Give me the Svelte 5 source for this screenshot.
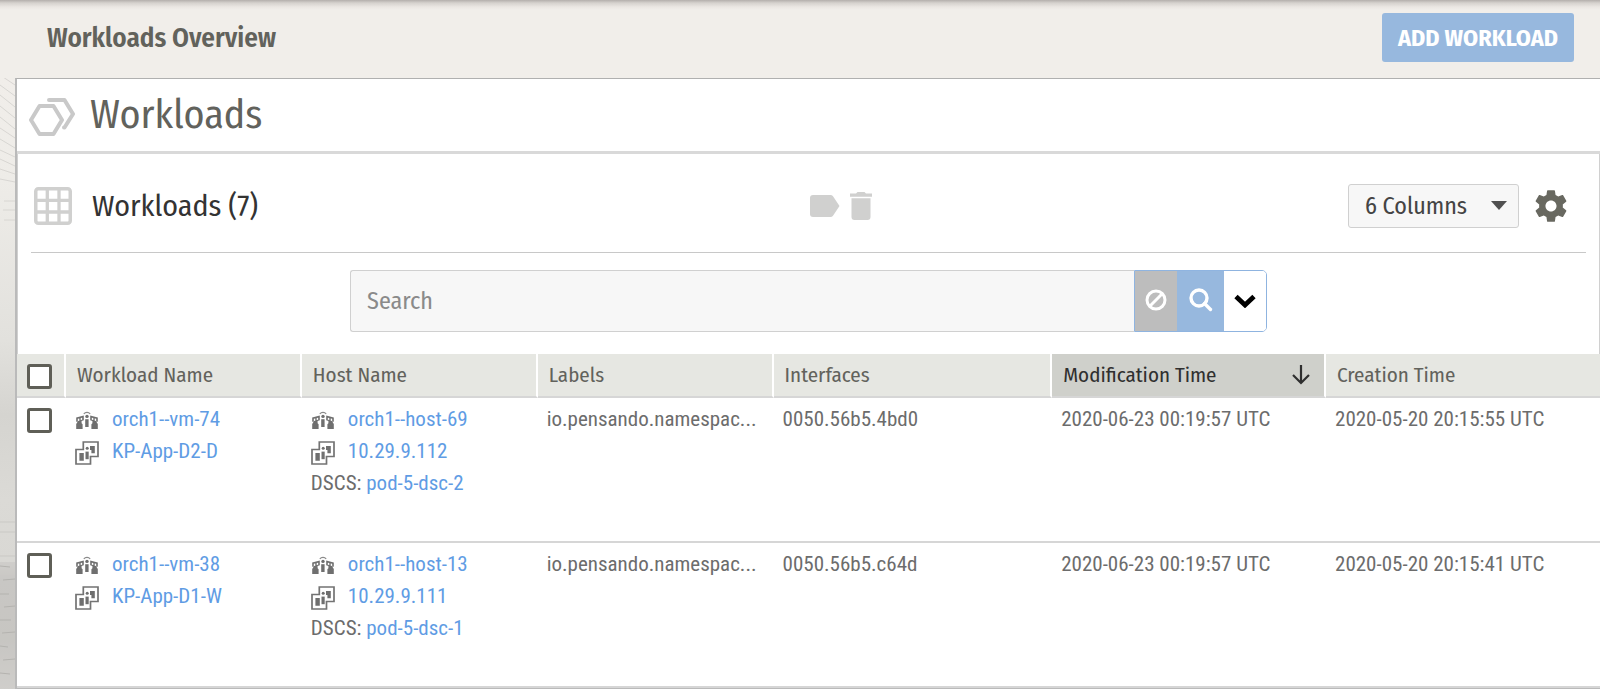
<script>
  const columns = [
    { name: 'Workload Name', cls: 'w1' },
    { name: 'Host Name', cls: 'w1' },
    { name: 'Labels', cls: 'w1' },
    { name: 'Interfaces', cls: 'w2' },
    { name: 'Modification Time', cls: 'w3', sorted: true },
    { name: 'Creation Time', cls: 'rest' }
  ];
  const rows = [
    { orch: 'orch1--vm-74', vm: 'KP-App-D2-D', host: 'orch1--host-69', ip: '10.29.9.112', dsc: 'pod-5-dsc-2', label: 'io.pensando.namespac...', mac: '0050.56b5.4bd0', mod: '2020-06-23 00:19:57 UTC', created: '2020-05-20 20:15:55 UTC' },
    { orch: 'orch1--vm-38', vm: 'KP-App-D1-W', host: 'orch1--host-13', ip: '10.29.9.111', dsc: 'pod-5-dsc-1', label: 'io.pensando.namespac...', mac: '0050.56b5.c64d', mod: '2020-06-23 00:19:57 UTC', created: '2020-05-20 20:15:41 UTC' }
  ];
</script>

{#snippet orchIcon()}
  <svg class="ic" width="24" height="24" viewBox="0 0 24 24" aria-hidden="true">
    <g fill="#6f6f6f">
      <circle cx="12" cy="7.400" r="1.700" />
      <path d="M10.200 10.200h3.400V18H10.200z" />
      <path d="M1.200 8.400 8.800 6.600v4.600L6.600 12v2.200l1 1V20H1.200v-5l1.600-2.400-1.600.2z" />
      <path d="M22.800 8.400 15.200 6.600v4.600l2.200.8v2.200l-1 1V20h6.400v-5l-1.600-2.400 1.600.2z" />
    </g>
    <path d="M8.800 5a3.900 3.900 0 0 1 6.400 0" fill="none" stroke="#8a8a8a" stroke-width="1.200" />
    <path d="M2.800 9.800l1.500-.4v2.400l-1.500.3zM5.700 9.100l1.500-.4v2l-1.500.4zM21.200 9.800l-1.500-.4v2.400l1.500.3zM18.300 9.100l-1.500-.4v2l1.500.4z" fill="#fff" />
  </svg>
{/snippet}

{#snippet vmIcon()}
  <svg class="ic" width="24" height="24" viewBox="0 0 24 24" aria-hidden="true">
    <path d="M8.300 8.500V1H23v14.500h-7.500V23H1V8.500z" fill="none" stroke="#737373" stroke-width="1.700" />
    <g fill="#6f6f6f">
      <path d="M4.400 12h4.400v7.800H4.400zM15 5h4.800v7.200h-3.400V9H15z" />
      <circle cx="12.200" cy="7.200" r="1.500" />
      <path d="M10.500 10.600h3.200v7.600h-3.200z" />
    </g>
  </svg>
{/snippet}

<div class="page">
  <svg class="texture" width="15" height="615" viewBox="0 0 15 615" fill="none" stroke="#d8d6d2" aria-hidden="true">
    <path d="M0 0 15 10M0 10 15 21M0 20 15 32M0 31 15 43M0 42 15 54M0 53 15 63M0 64 15 73M0 75 15 82M0 84 15 91M0 94 15 99M0 104 15 107M4 126H15M3 135H15M4 145H15" />
    <path d="M0 447H15M0 457H15M0 481H15" stroke="#cac9c5" />
    <path d="M0 487H15V615H0z" fill="#c5c4c0" fill-opacity=".45" stroke="none" />
    <path d="M0 491 10 492M3 505 15 504M0 519H9M4 532 15 531M0 545H11M2 558 15 557M0 571 8 572M3 585 15 584M0 598 10 599" stroke="#b4b3af" />
  </svg>
  <header>
    <h1>Workloads Overview</h1>
    <button class="add">ADD WORKLOAD</button>
  </header>
  <main>
    <div class="title">
      <svg width="46" height="38" viewBox="0 0 46 38" fill="none" stroke="#c9c9c9" stroke-width="4" stroke-linejoin="round" stroke-linecap="round" aria-hidden="true">
        <path d="M10.500 8h14L33 22 24.500 36h-14L2 22z" />
        <path d="M20 2h15.500L44 16 35.500 29.500H35" />
      </svg>
      <h2>Workloads</h2>
    </div>
    <section>
      <div class="toolbar">
        <div class="left">
          <svg width="38" height="38" viewBox="0 0 38 38" aria-hidden="true">
            <rect x="1.750" y="1.750" width="34.500" height="34.500" rx="2.500" fill="none" stroke="#d0d0cf" stroke-width="3.500" />
            <path d="M13.300 1v36M25 1v36M1 13.300h36M1 25h36" stroke="#d0d0cf" stroke-width="3.300" />
          </svg>
          <h3>Workloads (7)</h3>
        </div>
        <div class="actions">
          <button aria-label="Edit labels">
            <svg width="30" height="22" viewBox="0 0 30 22"><path d="M3 0h17.500q1.500 0 2.500 1.300L29.500 11 23 20.700Q22 22 20.500 22H3q-3 0-3-3V3q0-3 3-3z" fill="#d0d0cf" /></svg>
          </button>
          <button aria-label="Delete">
            <svg width="22" height="28" viewBox="0 0 22 28"><path d="M0 1.500h6L7.500 0h7L16 1.500h6v3.200H0zM1.500 6.200h19V25q0 3-3 3h-13q-3 0-3-3z" fill="#d0d0cf" /></svg>
          </button>
        </div>
        <div class="right">
          <div class="picker">
            <select aria-label="Columns"><option>6 Columns</option></select>
            <svg width="16" height="9" viewBox="0 0 16 9" aria-hidden="true"><path d="M0 0h16L8 9z" fill="#505050" /></svg>
          </div>
          <button aria-label="Settings">
            <svg width="38" height="38" viewBox="0 0 24 24"><path fill="#686860" d="M19.430 12.980c.04-.32.07-.64.07-.98s-.03-.66-.07-.98l2.110-1.650c.19-.15.24-.42.12-.64l-2-3.460c-.12-.22-.39-.3-.61-.22l-2.490 1c-.52-.4-1.080-.73-1.690-.98l-.38-2.650C14.460 2.180 14.250 2 14 2h-4c-.25 0-.46.18-.49.42l-.38 2.650c-.61.25-1.170.59-1.690.98l-2.490-1c-.23-.09-.49 0-.61.22l-2 3.460c-.13.22-.07.49.12.64l2.110 1.650c-.04.32-.07.65-.07.98s.03.66.07.98l-2.110 1.650c-.19.15-.24.42-.12.64l2 3.460c.12.22.39.3.61.22l2.490-1c.52.4 1.080.73 1.690.98l.38 2.650c.03.24.24.42.49.42h4c.25 0 .46-.18.49-.42l.38-2.650c.61-.25 1.170-.59 1.690-.98l2.490 1c.23.09.49 0 .61-.22l2-3.460c.12-.22.07-.49-.12-.64l-2.110-1.650zM12 15.500c-1.930 0-3.500-1.570-3.500-3.500s1.570-3.500 3.500-3.500 3.500 1.570 3.500 3.500-1.570 3.500-3.500 3.500z" /></svg>
          </button>
        </div>
      </div>
      <form class="search" onsubmit={(e) => e.preventDefault()}>
        <input type="text" placeholder="Search" aria-label="Search" />
        <div class="group">
          <button type="button" class="clear" aria-label="Clear">
            <svg width="22" height="22" viewBox="0 0 22 22" fill="none" stroke="#fff" stroke-width="3"><circle cx="11" cy="11" r="9" /><path d="M17.200 4.800 4.800 17.200" /></svg>
          </button>
          <button type="submit" class="go" aria-label="Run search">
            <svg width="24" height="24" viewBox="0 0 24 24" fill="none" stroke="#fff" stroke-width="3.400"><circle cx="10" cy="10" r="8" /><path d="M15.500 15.500 21.500 21.500" stroke-linecap="round" /></svg>
          </button>
          <button type="button" class="more" aria-label="Advanced search">
            <svg width="22" height="14" viewBox="0 0 22 14" fill="none" stroke="#000" stroke-width="4.800"><path d="M2 2.500 11 11 20 2.500" /></svg>
          </button>
        </div>
      </form>
    </section>
    <table>
      <thead>
        <tr>
          <th class="w0"><input type="checkbox" aria-label="Select all" /></th>
          {#each columns as c}
            <th class={c.cls} class:sorted={c.sorted}>
              <div>
                {c.name}
                {#if c.sorted}
                  <svg width="18" height="20" viewBox="0 0 18 20" fill="none" stroke="#2f2f2f" stroke-width="2.200" aria-hidden="true"><path d="M9 0v17.500M1 10 9 18 17 10" /></svg>
                {/if}
              </div>
            </th>
          {/each}
        </tr>
      </thead>
      <tbody>
        {#each rows as r}
          <tr>
            <td class="w0"><input type="checkbox" aria-label={'Select ' + r.vm} /></td>
            <td>
              <div class="line">{@render orchIcon()}<a href="#orch">{r.orch}</a></div>
              <div class="line">{@render vmIcon()}<a href="#vm">{r.vm}</a></div>
            </td>
            <td>
              <div class="line">{@render orchIcon()}<a href="#host">{r.host}</a></div>
              <div class="line">{@render vmIcon()}<a href="#ip">{r.ip}</a></div>
              <div>DSCS: <a href="#dsc">{r.dsc}</a></div>
            </td>
            <td>{r.label}</td>
            <td>{r.mac}</td>
            <td>{r.mod}</td>
            <td>{r.created}</td>
          </tr>
        {/each}
      </tbody>
    </table>
  </main>
</div>

<style>
  :global(body) { background: #fff; }
  .page {
    position: relative;
    font-family: "Fira Sans Condensed", "Roboto Condensed", "Liberation Sans Narrow", "Open Sans", sans-serif;
    color: #62625c;
    min-height: 100vh;
    box-sizing: border-box;
    padding-left: 15px;
    overflow: hidden;
    background: linear-gradient(180deg, #f1eeea 78px, #eeece8 180px, #e2e1dd 340px, #d5d4d0 415px, #dbdad6 500px, #d9d8d4 561px, #cbcac6 580px, #c9c8c4 640px, #d8d7d3 689px);
  }
  .texture { position: absolute; left: 0; top: 75px; }
  header {
    position: relative;
    display: flex;
    align-items: center;
    justify-content: space-between;
    height: 78px;
    box-sizing: border-box;
    margin-left: -15px;
    padding: 0 26px 3px 47px;
    background: linear-gradient(180deg, #b4afac 0, #d6d2ce 3px, #ebe7e3 7px, #f1eeea 10px);
  }
  h1, h2, h3 { margin: 0; font-weight: 400; }
  h1 { font-size: 27px; font-weight: 600; }
  h2 { font-size: 40px; line-height: 48px; padding-bottom: 3px; }
  h3 { font-size: 30px; color: #333; }
  button { border: 0; padding: 0; background: none; font-family: inherit; display: flex; align-items: center; justify-content: center; }
  .add { padding: 0 16px; height: 49px; border-radius: 3px; background: #97b8de; color: #fff; font-size: 24px; font-weight: 700; white-space: nowrap; }
  main { background: #fff; border: 2px solid #bababa; border-top: 1px solid #b0b0b0; border-right: 0; min-height: 609px; }
  .title { display: flex; align-items: center; gap: 15px; height: 75px; box-sizing: border-box; padding: 3px 12px 0; border-bottom: 3px solid #d9d9d9; }
  section { display: flow-root; border: 1px solid #d0d0d0; border-width: 0 1px; }
  .toolbar { display: grid; grid-template-columns: 10fr auto 9fr; align-items: center; height: 99px; margin: 0 13px; border-bottom: 1px solid #c8c8c8; padding: 6px 16px 0 3px; box-sizing: border-box; }
  .left, .right, .actions { display: flex; align-items: center; }
  .left { gap: 20px; }
  .actions { gap: 10px; }
  .right { justify-content: flex-end; gap: 13px; }
  .picker { position: relative; }
  .picker svg { position: absolute; right: 12px; top: 17px; pointer-events: none; }
  select {
    display: block; appearance: none; width: 171px; height: 44px; border: 1px solid #d0d0d0; border-radius: 3px; padding: 0 16px;
    font-family: inherit; font-size: 24px; color: #444; background: #f7f7f7;
  }
  .search { display: flex; height: 62px; margin: 17px 21% 22px; }
  .search input { flex: 1; min-width: 0; box-sizing: border-box; border: 1px solid #d0d0d0; border-right: 0; border-radius: 3px 0 0 3px; background: #f7f7f7; padding: 0 16px; font-family: inherit; font-size: 24px; }
  .search input::placeholder { color: #8a8a8a; opacity: 1; }
  .group { display: flex; border: 1px solid #8fb4e0; border-radius: 0 5px 5px 0; overflow: hidden; }
  .clear, .go { padding-bottom: 3px; }
  .clear { width: 42px; background: #bdbdbd; }
  .go { width: 47px; background: #97b8de; }
  .more { width: 42px; background: #fff; }
  table { width: 100%; border-collapse: separate; border-spacing: 0; table-layout: fixed; font-size: 21px; line-height: 32px; }
  th, td { box-sizing: border-box; }
  th { height: 44px; padding: 0 14px 0 11px; text-align: left; font-weight: 400; background: #e6e7e2; border-bottom: 2px solid #d6d6d6; border-right: 2px solid #fff; white-space: nowrap; }
  th div { display: flex; align-items: center; justify-content: space-between; }
  th.rest { border-right: 0; }
  th.sorted { background: #cfd0cb; color: #2f2f2f; }
  td { height: 145px; vertical-align: top; padding: 5px 9px; border-bottom: 2px solid #d6d6d6; font-family: "Roboto Condensed", "Liberation Sans Narrow", Roboto, sans-serif; color: #6c6c6c; white-space: nowrap; }
  .w0 { width: 49px; }
  th.w0 { padding: 2px 10px 0; }
  td.w0 { padding: 10px 10px 0; }
  .w1 { width: 14.9%; }
  .w2 { width: 17.6%; }
  .w3 { width: 17.3%; }
  .line { display: flex; align-items: center; gap: 13px; }
  .ic { margin-top: 4px; }
  a { color: #5f9ce4; text-decoration: none; }
  input[type='checkbox'] { appearance: none; display: block; box-sizing: border-box; width: 25px; height: 25px; margin: 0; border: 3px solid #5f5f57; border-radius: 3px; background: #fff; }
</style>
